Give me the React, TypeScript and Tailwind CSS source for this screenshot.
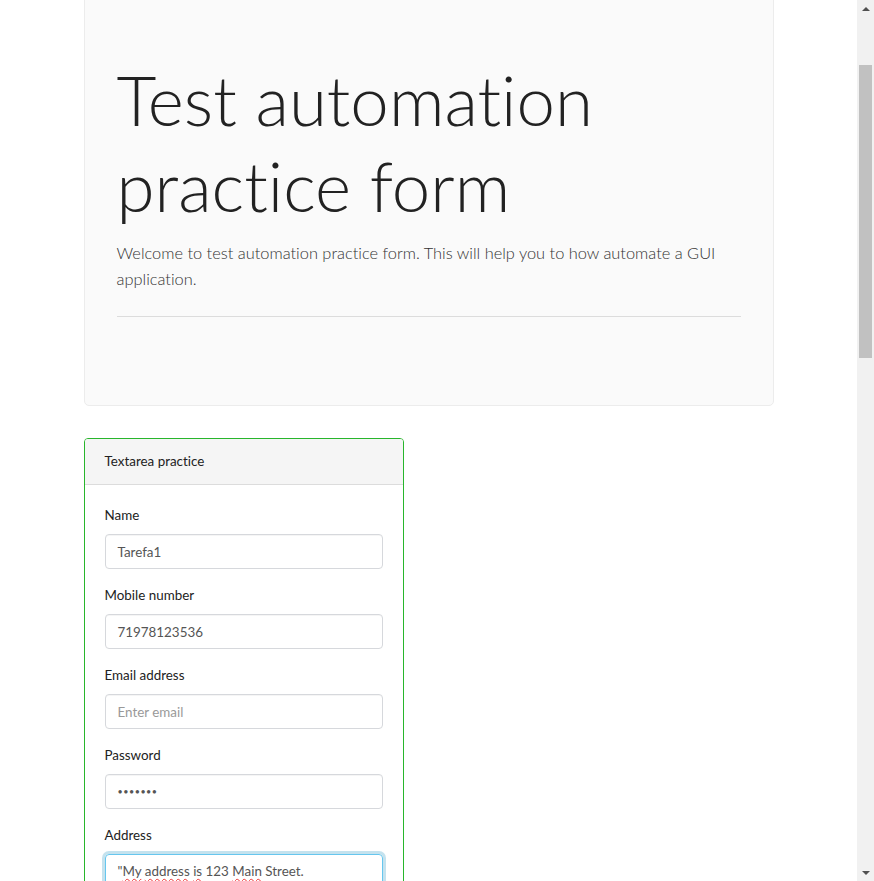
import React from "react";

const font = { fontFamily: "Lato, 'Open Sans', sans-serif" };

function Field({ label, value, placeholder, dots }: { label: string; value?: string; placeholder?: string; dots?: boolean }) {
  return (
    <div className="mb-4">
      <div className="text-[13.4px] leading-[21px] text-[#222] mb-2">{label}</div>
      <div className="h-[35px] border border-[#d6d8dc] rounded-[4px] px-[12px] flex items-center text-[13.4px] bg-white shadow-[inset_0_1px_0_rgba(0,0,0,0.04)]">
        {dots ? (
          <span className="text-[#555] text-[9px] tracking-[0.5px]">•••••••</span>
        ) : value ? (
          <span className="text-[#555]">{value}</span>
        ) : (
          <span className="text-[#999]">{placeholder}</span>
        )}
      </div>
    </div>
  );
}

function Squiggle({ children }: { children: React.ReactNode }) {
  return <span className="underline decoration-wavy decoration-[#e33] decoration-1 underline-offset-[2px]">{children}</span>;
}

function Scrollbar() {
  return (
    <div className="w-[17px] h-full bg-[#f1f1f1] flex flex-col items-center shrink-0">
      <div className="h-[17px] w-full flex items-center justify-center">
        <div className="w-0 h-0 border-l-[4px] border-r-[4px] border-b-[4px] border-l-transparent border-r-transparent border-b-[#505050]" />
      </div>
      <div className="mt-[48px] w-[13px] h-[293px] bg-[#c1c1c1]" />
      <div className="flex-1" />
      <div className="h-[17px] w-full flex items-center justify-center">
        <div className="w-0 h-0 border-l-[4px] border-r-[4px] border-t-[4px] border-l-transparent border-r-transparent border-t-[#505050]" />
      </div>
    </div>
  );
}

export default function App() {
  return (
    <div className="flex h-[881px] w-[874px] overflow-hidden bg-white [font-variant-ligatures:none]" style={font}>
      <div className="flex-1 overflow-hidden">
        <div className="w-[720px] mx-auto px-[15px]">
          <div className="-mt-[10px] bg-[#fafafa] border border-[#ececec] rounded-[5px] px-[32px] pt-[66px] pb-[64px] mb-[32px]">
            <h1 className="text-[69px] leading-[86.4px] font-light text-[#222] mb-[10px]">
              Test automation practice form
            </h1>
            <p className="text-[16.4px] leading-[26.25px] font-light text-[#333]">
              Welcome to test automation practice form. This will help you to how automate a GUI application.
            </p>
            <hr className="my-[24px] border-t border-[#dcdcdc]" />
          </div>

          <div className="w-[320px] border border-[#28b62c] rounded-[4px] overflow-hidden">
            <div className="bg-[#f5f5f5] border-b border-[#dcdcdc] px-[20px] py-[12px] text-[13.4px] leading-[21px] text-[#222]">
              Textarea practice
            </div>
            <div className="p-[20px] bg-white">
              <Field label="Name" value="Tarefa1" />
              <Field label="Mobile number" value="71978123536" />
              <Field label="Email address" placeholder="Enter email" />
              <Field label="Password" dots />
              <div className="text-[13.4px] leading-[21px] text-[#222] mb-2">Address</div>
              <div className="h-[90px] border border-[#66c6ee] rounded-[4px] px-[12px] py-[6px] text-[13.4px] leading-[21px] text-[#555] shadow-[0_0_0_3px_rgba(21,140,186,0.25)]">
                "<Squiggle>My</Squiggle> <Squiggle>address</Squiggle> <Squiggle>is</Squiggle> 123 <Squiggle>Main</Squiggle> Street.
              </div>
            </div>
          </div>
        </div>
      </div>
      <Scrollbar />
    </div>
  );
}
